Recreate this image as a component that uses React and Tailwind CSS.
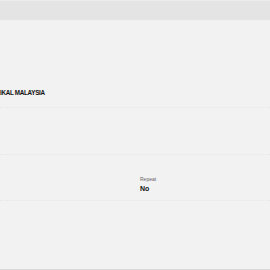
export default function App() {
  return (
    <div className="w-[270px] h-[270px] overflow-hidden bg-[#f2f2f2] flex flex-col" style={{ fontFamily: '"Liberation Sans", Arial, sans-serif' }}>
      <div className="h-[20px] shrink-0 bg-[#e4e4e4] border-t border-[#ececec]" />
      <div className="h-[88px] shrink-0 flex items-end pb-[11px] border-b border-dotted border-[#e6e6e6] overflow-hidden">
        <div className="whitespace-nowrap text-[6.3px] font-bold tracking-[-0.3px] text-[#111] leading-none">IKAL MALAYSIA</div>
      </div>
      <div className="h-[47px] shrink-0 border-b border-dotted border-[#e6e6e6]" />
      <div className="h-[46px] shrink-0 border-b border-dotted border-[#e6e6e6] flex">
        <div className="w-[140px] shrink-0" />
        <div className="flex flex-col pt-[22px]">
          <div className="text-[5px] text-[#666] leading-none">Repeat</div>
          <div className="text-[7px] font-bold text-[#111] leading-none mt-[3px]">No</div>
        </div>
      </div>
      <div className="flex-1 border-b border-[#d9d9d9]" />
    </div>
  );
}
